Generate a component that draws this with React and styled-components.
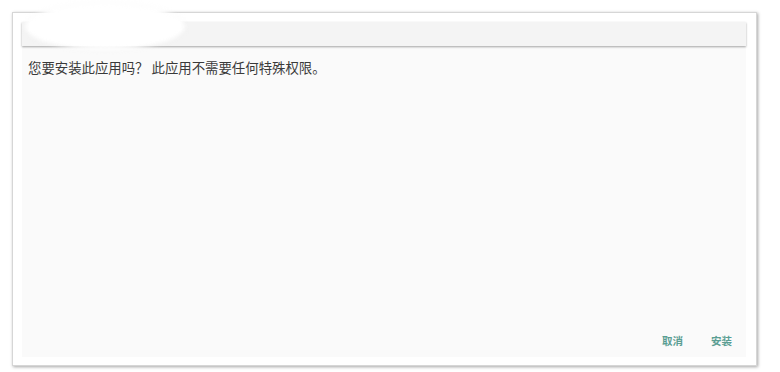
import React from "react";
import styled, { createGlobalStyle } from "styled-components";

const GlobalStyle = createGlobalStyle`
  html, body {
    margin: 0;
    padding: 0;
    background: #ffffff;
  }
  body {
    font-family: "Noto Sans CJK SC", "Noto Sans", sans-serif;
  }
`;

const Page = styled.div`
  width: 780px;
  height: 372px;
  padding: 12px 0 0 12px;
  box-sizing: border-box;
  position: relative;
`;

const Card = styled.div`
  width: 745px;
  height: 354px;
  box-sizing: border-box;
  background: #ffffff;
  border: 1px solid #d6d6d6;
  box-shadow: 1px 1px 3px rgba(0, 0, 0, 0.35);
  padding: 9px 10px 8px 9px;
  display: flex;
`;

const Panel = styled.div`
  flex: 1;
  display: flex;
  flex-direction: column;
  background: #fafafa;
`;

const HeaderBar = styled.div`
  height: 24px;
  flex: none;
  background: #f4f4f4;
  box-shadow: 0 1px 2px rgba(0, 0, 0, 0.35);
`;

const Message = styled.p`
  margin: 12px 0 0 6px;
  font-size: 13.4px;
  line-height: 18px;
  color: #3a3a3a;
  flex: 1;
`;

const Footer = styled.div`
  display: flex;
  justify-content: flex-end;
  gap: 28px;
  padding: 0 14px 8px 0;
`;

const ActionButton = styled.button`
  border: none;
  background: none;
  padding: 0;
  font-family: inherit;
  font-size: 10.5px;
  font-weight: 600;
  line-height: 16px;
  color: #5a9e93;
  cursor: pointer;
`;

const Redaction = styled.div`
  position: absolute;
  left: 25px;
  top: 3px;
  width: 160px;
  height: 47px;
  border-radius: 50%;
  background: #ffffff;
  box-shadow: 0 0 2px rgba(0, 0, 0, 0.08);
  filter: blur(2px);
`;

export default function App() {
  return (
    <>
      <GlobalStyle />
      <Page>
        <Card>
          <Panel>
            <HeaderBar />
            <Message>您要安装此应用吗？ 此应用不需要任何特殊权限。</Message>
            <Footer>
              <ActionButton>取消</ActionButton>
              <ActionButton>安装</ActionButton>
            </Footer>
          </Panel>
        </Card>
        <Redaction />
      </Page>
    </>
  );
}
